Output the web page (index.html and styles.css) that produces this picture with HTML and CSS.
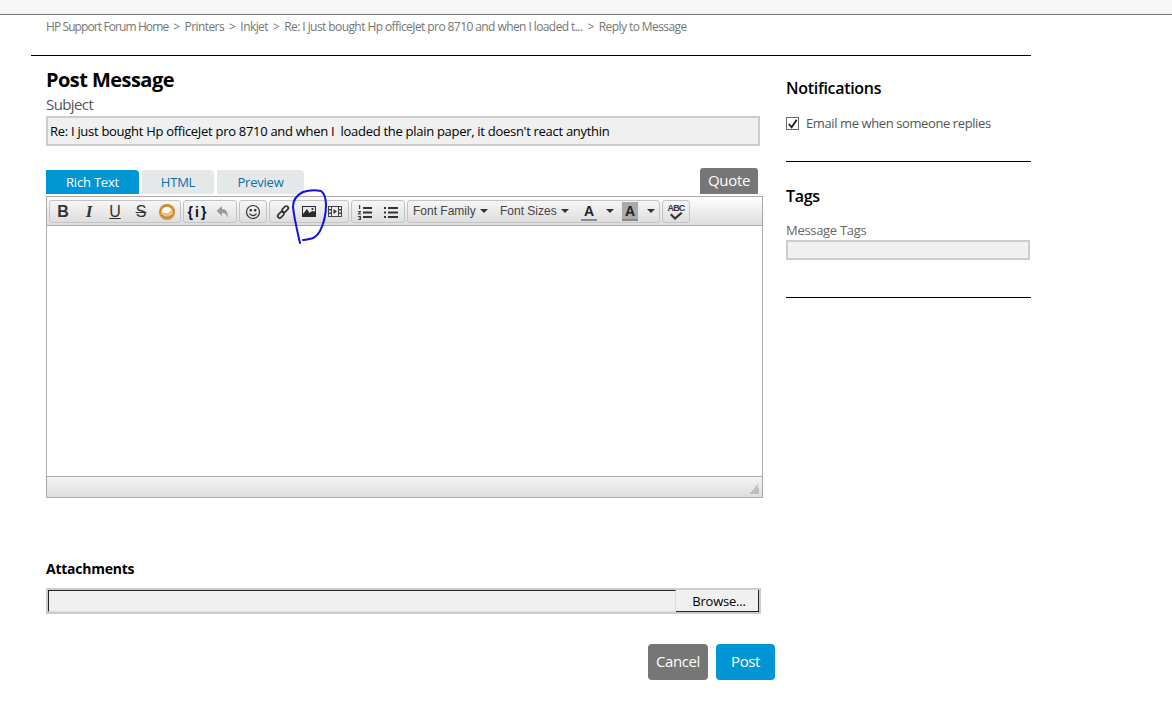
FILE: index.html
```html
<!DOCTYPE html>
<html lang="en">
<head>
<meta charset="utf-8">
<title>Reply to Message</title>
<link rel="stylesheet" href="styles.css">
</head>
<body>
<div class="topbar"></div>
<div class="page">
  <nav class="crumbs">
    <span class="home">HP Support Forum Home</span><i>&gt;</i><span>Printers</span><i>&gt;</i><span>Inkjet</span><i>&gt;</i><span>Re: I just bought Hp officeJet pro 8710 and when I loaded t...</span><i>&gt;</i><span>Reply to Message</span>
  </nav>
  <div class="columns">
    <main class="main">
      <h1>Post Message</h1>
      <label class="subject-label">Subject</label>
      <div class="subject">Re: I just bought Hp officeJet pro 8710 and when I&nbsp; loaded the plain paper, it doesn't react anythin</div>
      <div class="tabrow">
        <div class="tabs">
          <span class="tab active">Rich Text</span>
          <span class="tab t-html">HTML</span>
          <span class="tab t-prev">Preview</span>
        </div>
        <span class="quote">Quote</span>
      </div>
      <div class="editor">
        <div class="toolbar">
          <div class="group">
            <span class="btn glyph">B</span>
            <span class="btn glyph it">I</span>
            <span class="btn glyph un">U</span>
            <span class="btn glyph st">S</span>
            <span class="btn"><svg width="18" height="18" viewBox="0 0 18 18"><circle cx="9" cy="9" r="8" fill="#d08a2e"/><circle cx="9" cy="9.500" r="6" fill="#efc27c"/><path d="M4 8c1-4 6-5 8-3 2 2-1 5-3 5S4 10 4 8z" fill="#fff"/><path d="M4 12c2 3 8 3 10 0" stroke="#a9651a" fill="none"/></svg></span>
          </div>
          <div class="group">
            <span class="btn code">{<b>i</b>}</span>
            <span class="btn"><svg width="16" height="16" viewBox="0 0 16 16"><path d="M7 2 1.500 7 7 12V9c3 0 4.500 1 5.500 5 1-5-1-9-5.500-9z" fill="#9a9a9a"/></svg></span>
          </div>
          <div class="group">
            <span class="btn"><svg width="16" height="16" viewBox="0 0 16 16" fill="none" stroke="#333" stroke-width="1.200"><circle cx="8" cy="8" r="6.500"/><circle cx="5.800" cy="6.200" r=".7" fill="#333"/><circle cx="10.200" cy="6.200" r=".7" fill="#333"/><path d="M4.500 9.500c1.500 2.800 5.500 2.800 7 0"/></svg></span>
          </div>
          <div class="group">
            <span class="btn"><svg width="16" height="16" viewBox="0 0 16 16" fill="none" stroke="#333" stroke-width="1.700"><rect x="8.200" y="1.600" width="4" height="7" rx="2" transform="rotate(45 10.200 5.100)"/><rect x="3.800" y="7.400" width="4" height="7" rx="2" transform="rotate(45 5.800 10.900)"/></svg></span>
            <span class="btn"><svg width="14" height="11" viewBox="0 0 14 11"><path d="M0 0h14v11H0z" fill="#2a2a2a"/><path d="M1 1h12v4.500L10 5 7.500 7 5 3 1 8z" fill="#e8e8e8"/><circle cx="10.500" cy="3" r="1.100" fill="#2a2a2a"/></svg></span>
            <span class="btn"><svg width="14" height="11" viewBox="0 0 14 11"><path d="M0 0h14v11H0z" fill="#444"/><path d="M1 1h2v2H1zM1 4.500h2v2H1zM1 8h2v2H1zM11 1h2v2h-2zM11 4.500h2v2h-2zM11 8h2v2h-2zM4 1h6v9H4z" fill="#ececec"/><path d="M5.500 3 9 5.500 5.500 8z" fill="#333"/></svg></span>
          </div>
          <div class="group">
            <span class="btn"><svg width="16" height="16" viewBox="0 0 16 16"><path d="M6 3h9v2H6zM6 7.500h9v2H6zM6 12h9v2H6z" fill="#333"/><path d="M2 1h1.200v4H2zM1 7h3v1L2.500 9.500H4v1H1v-1L2.700 8H1zM1 12h3v4H1v-1h2v-.5H2v-1h1V13H1z" fill="#444"/></svg></span>
            <span class="btn"><svg width="16" height="16" viewBox="0 0 16 16"><path d="M5 3h10v2H5zM5 7.500h10v2H5zM5 12h10v2H5zM1 3h2v2H1zM1 7.500h2v2H1zM1 12h2v2H1z" fill="#333"/></svg></span>
          </div>
          <div class="group fonts">
            <span class="select s-family">Font Family<u></u></span>
            <span class="select s-size">Font Sizes<u></u></span>
            <span class="color c-fore"><em>A</em></span><span class="arrow a-fore"><u></u></span>
            <span class="color c-back"><em>A</em></span><span class="arrow a-back"><u></u></span>
          </div>
          <div class="group">
            <span class="btn abc">ABC<svg width="14" height="8" viewBox="0 0 14 8"><path d="M1 3l1.500-1.500L6 5l6-5 1.500 1.500L6 8z" fill="#333"/></svg></span>
          </div>
        </div>
        <div class="area"></div>
        <div class="status"><svg width="11" height="11" viewBox="0 0 11 11"><path d="M8 1h1M6 3h3M5 5h5M3 7h7M1 9h9" stroke="#999"/></svg></div>
      </div>
      <h3 class="attach-title">Attachments</h3>
      <div class="file"><span class="file-input"></span><span class="browse">Browse...</span></div>
      <div class="actions">
        <span class="action cancel">Cancel</span>
        <span class="action post">Post</span>
      </div>
    </main>
    <aside class="side">
      <h2>Notifications</h2>
      <div class="check"><span class="box"><svg width="12" height="12" viewBox="0 0 12 12"><path d="M2 6l3 3.500L10.500 1.500" fill="none" stroke="#222" stroke-width="2"/></svg></span>Email me when someone replies</div>
      <hr>
      <h2 class="tags">Tags</h2>
      <div class="tag-label">Message Tags</div>
      <div class="tag-input"></div>
      <hr class="last">
    </aside>
  </div>
</div>
<svg class="scribble" width="50" height="64" viewBox="0 0 50 64"><path d="M11 55C9 46 5 30 4 19 4 12 8 7 14 4 20 2 27 2 32 3 36 6 37 12 37 17 37 26 34 37 31 43 28 48 24 51 20 51 17 52 15 52 14 52" fill="none" stroke="#1010e0" stroke-width="2" stroke-linecap="round" stroke-linejoin="round"/></svg>
</body>
</html>
```
FILE: styles.css
```css
* { box-sizing: border-box; }
body { margin: 0; background: #fff; font-family: "Open Sans", "Liberation Sans", sans-serif; color: #000; position: relative; height: 707px; overflow: hidden; }
.topbar { height: 15px; background: #f6f6f6; border-bottom: 1px solid #767676; }
.page { width: 1000px; margin-left: 31px; }
.crumbs { height: 41px; border-bottom: 1px solid #000; padding: 4px 0 0 15px; font-size: 12px; line-height: 16px; color: #767676; white-space: nowrap; letter-spacing: -0.58px; }
.crumbs i { font-style: normal; margin: 0 5px; }
.home { letter-spacing: -0.9px; }
.columns { display: flex; }
.main { width: 732px; padding-left: 15px; }
h1 { margin: 12px 0 0; font-size: 20px; line-height: 24px; font-weight: 700; letter-spacing: -0.55px; }
.subject-label { display: block; font-size: 15px; line-height: 20px; color: #555; margin-top: 2px; letter-spacing: -0.6px; }
.subject { width: 714px; height: 30px; margin-top: 2px; background: #f0f0f0; border: 2px solid #ccc; padding: 0 2px; font-size: 13px; line-height: 26px; white-space: nowrap; overflow: hidden; letter-spacing: -0.29px; }
.tabrow { display: flex; justify-content: space-between; align-items: flex-end; width: 712px; margin: 22px 0 2px; height: 26px; }
.tabs { display: flex; gap: 3px; }
.tab { height: 24px; border-radius: 0 4px 0 0; font-size: 13px; line-height: 25px; text-align: center; background: #e5e8e8; color: #0a6fa8; letter-spacing: -0.2px; }
.tab.active { width: 93px; background: #0096d6; color: #fff; }
.t-html { width: 72px; }
.t-prev { width: 87px; }
.quote { width: 58px; height: 26px; background: #767676; color: #fff; border-radius: 3px 3px 0 0; font-size: 15px; line-height: 25px; text-align: center; letter-spacing: -0.3px; }
.editor { width: 717px; height: 302px; border: 1px solid #aaa; display: flex; flex-direction: column; }
.toolbar { height: 29px; border-bottom: 1px solid #aaa; background: linear-gradient(#fff, #ddd); padding: 3px 0 0 2px; display: flex; gap: 2px; }
.group { height: 23px; display: flex; border: 1px solid #c4c4c4; border-radius: 3px; background: linear-gradient(#f6f6f6, #dedede); }
.btn { width: 26px; display: flex; align-items: center; justify-content: center; }
.glyph { font: 700 16px "Liberation Sans", sans-serif; color: #333; }
.it { font: italic 700 17px "Liberation Serif", serif; }
.un { text-decoration: underline; font-weight: 400; }
.st { text-decoration: line-through; font-weight: 400; }
.code { font: 700 14px "Liberation Sans", sans-serif; color: #111; }
.code b { margin: 0 2px; }
.fonts { width: 253px; font: 12px "Liberation Sans", sans-serif; color: #444; align-items: center; padding-bottom: 1px; }
.select { display: flex; align-items: center; }
.select u, .arrow u { display: block; border: 4px solid transparent; border-top: 4px solid #333; border-bottom: 0; text-decoration: none; }
.select u { margin-left: 4px; }
.s-family { width: 92px; padding-left: 5px; }
.s-size { width: 79px; }
.color { width: 16px; height: 19px; text-align: center; }
.color em { display: block; height: 19px; border-bottom: 2px solid #888; font: 700 14px/18px "Liberation Sans", sans-serif; color: #222; }
.c-back em { background: #aaa; }
.c-fore { margin-left: 2px; }
.arrow { display: flex; padding-left: 9px; }
.a-fore { width: 25px; }
.a-back { width: 21px; }
.abc { flex-direction: column; font: 700 9px/8px "Liberation Sans", sans-serif; color: #333; width: 26px; letter-spacing: -0.8px; }
.area { flex: 1; background: #fff; }
.status { height: 21px; border-top: 1px solid #aaa; background: linear-gradient(#f4f4f4, #ddd); display: flex; justify-content: flex-end; align-items: flex-end; padding: 0 2px 2px 0; }
.attach-title { margin: 61px 0 0; font-size: 14px; line-height: 20px; font-weight: 700; letter-spacing: -0.25px; }
.file { width: 715px; height: 26px; margin-top: 9px; background: #ccc; padding: 2px; display: flex; }
.file-input { flex: 1; background: #f0f0f0; border: 1px solid #ddd; border-top: 1px solid #222; border-left: 1px solid #222; }
.browse { width: 83px; padding-left: 4px; background: #f0f0f0; border-right: 1px solid #222; border-bottom: 1px solid #222; font-size: 13px; line-height: 22px; text-align: center; letter-spacing: -0.2px; }
.actions { display: flex; justify-content: flex-end; gap: 8px; width: 729px; margin-top: 30px; }
.action { height: 36px; border-radius: 4px; color: #fff; font-size: 15px; line-height: 35px; text-align: center; letter-spacing: -0.4px; }
.cancel { width: 60px; background: #767676; }
.post { width: 59px; background: #0096d6; }
.side { width: 245px; margin-left: 23px; }
.side h2 { margin: 20px 0 0; font-size: 16px; line-height: 24px; font-weight: 600; letter-spacing: -0.3px; }
.check { display: flex; align-items: center; font-size: 13px; line-height: 18px; color: #555; margin-top: 14px; letter-spacing: -0.4px; }
.box { width: 13px; height: 13px; border: 1px solid #666; background: #fff; margin-right: 7px; display: flex; }
hr { margin: 29px 0 0; border: 0; border-top: 1px solid #000; }
.side .tags { margin-top: 22px; }
.tag-label { margin-top: 13px; font-size: 13px; line-height: 18px; color: #666; letter-spacing: -0.3px; }
.tag-input { width: 244px; height: 20px; margin-top: 1px; background: #f0f0f0; border: 2px solid #ccc; }
.last { margin-top: 37px; }
.scribble { position: absolute; left: 289px; top: 188px; }
```
